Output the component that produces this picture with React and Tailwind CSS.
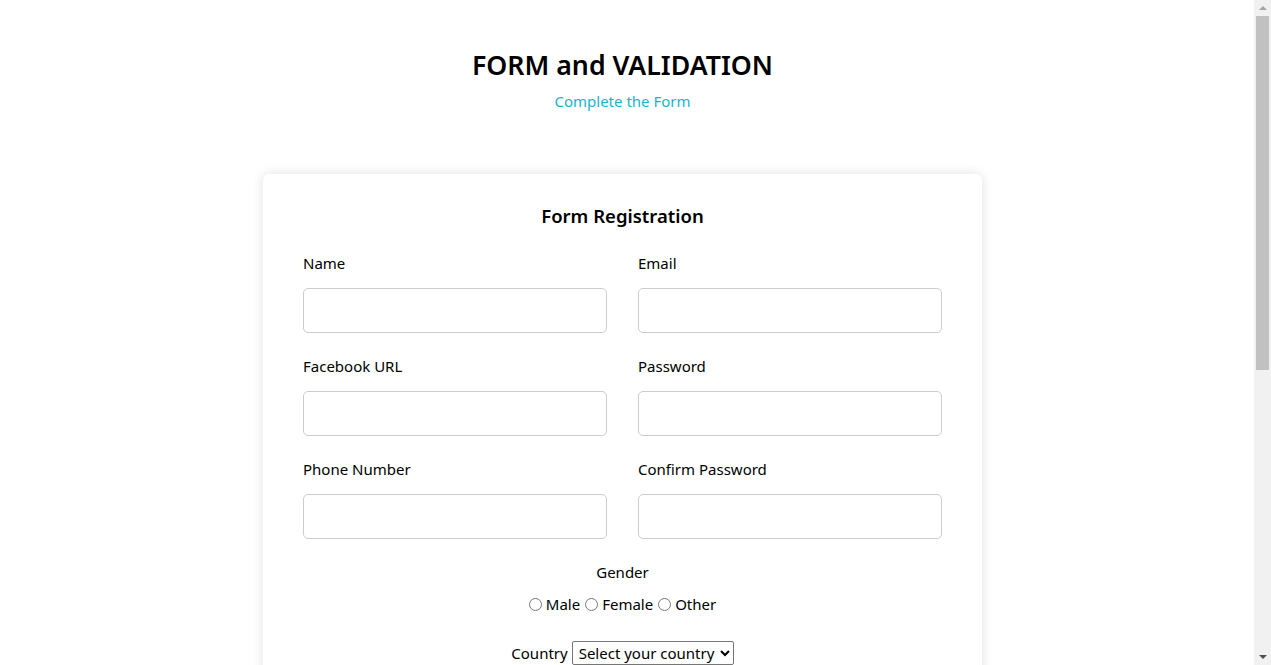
import React from "react";

const font = { fontFamily: '"Noto Sans", "Open Sans", sans-serif' };

function Field({ label, type = "text" }) {
  return (
    <div className="flex flex-col">
      <label className="mt-[3px] text-[15px] leading-[22px] text-black">{label}</label>
      <input
        type={type}
        className="mt-[14px] h-[45px] w-full rounded-[5px] border border-[#cccccc] bg-white px-3 outline-none"
      />
    </div>
  );
}

export default function App() {
  return (
    <div className="flex h-[665px] overflow-hidden bg-white text-black" style={font}>
      <div className="flex flex-1 flex-col items-center pr-[9px] pt-[46px]">
        <h1 className="text-[26.7px] font-semibold leading-[38px]">FORM and VALIDATION</h1>
        <p className="mt-[6px] text-[15px] leading-[22px] text-[#1ab4d0]">Complete the Form</p>

        <div className="mt-[62px] w-[719px] shrink-0 rounded-[6px] bg-white px-[40px] pt-[29px] pb-[40px] shadow-[0_0_12px_rgba(0,0,0,0.12)]">
          <h2 className="text-center text-[18.5px] font-semibold leading-[26px]">Form Registration</h2>
          <div className="mt-[20px] grid grid-cols-2 gap-x-[31px] gap-y-[19px]">
            <Field label="Name" />
            <Field label="Email" type="email" />
            <Field label="Facebook URL" />
            <Field label="Password" type="password" />
            <Field label="Phone Number" />
            <Field label="Confirm Password" type="password" />
          </div>
          <div className="mt-[22px] flex flex-col items-center text-[15px]">
            <div className="leading-[22px]">Gender</div>
            <div className="mt-[10px] flex items-center gap-[4px] leading-[22px]">
              <input type="radio" name="g" id="m" className="m-0 h-[13px] w-[13px]" />
              <label htmlFor="m" className="mr-[1px]">Male</label>
              <input type="radio" name="g" id="f" className="m-0 h-[13px] w-[13px]" />
              <label htmlFor="f" className="mr-[1px]">Female</label>
              <input type="radio" name="g" id="o" className="m-0 h-[13px] w-[13px]" />
              <label htmlFor="o">Other</label>
            </div>
            <div className="mt-[26px] flex items-center gap-[4px] leading-[22px]">
              <span>Country</span>
              <select className="h-[24px] rounded-[2px] border border-[#767676] bg-white px-[2px] text-[15px] text-black" defaultValue="">
                <option value="">Select your country</option>
                <option>Indonesia</option>
                <option>Malaysia</option>
                <option>Singapore</option>
              </select>
            </div>
            <button className="mt-[30px] rounded-[5px] bg-[#1ab4d0] px-6 py-2 text-white">Submit</button>
          </div>
        </div>
      </div>

      <div className="flex w-[17px] shrink-0 flex-col items-center bg-[#f1f1f1]">
        <div className="flex h-[16px] w-full items-center justify-center">
          <div className="h-0 w-0 border-x-[4px] border-b-[4px] border-x-transparent border-b-[#a3a3a3]" />
        </div>
        <div className="h-[354px] w-[13px] bg-[#c1c1c1]" />
        <div className="flex-1" />
        <div className="flex h-[16px] w-full items-center justify-center">
          <div className="h-0 w-0 border-x-[4px] border-t-[4px] border-x-transparent border-t-[#505050]" />
        </div>
      </div>
    </div>
  );
}
